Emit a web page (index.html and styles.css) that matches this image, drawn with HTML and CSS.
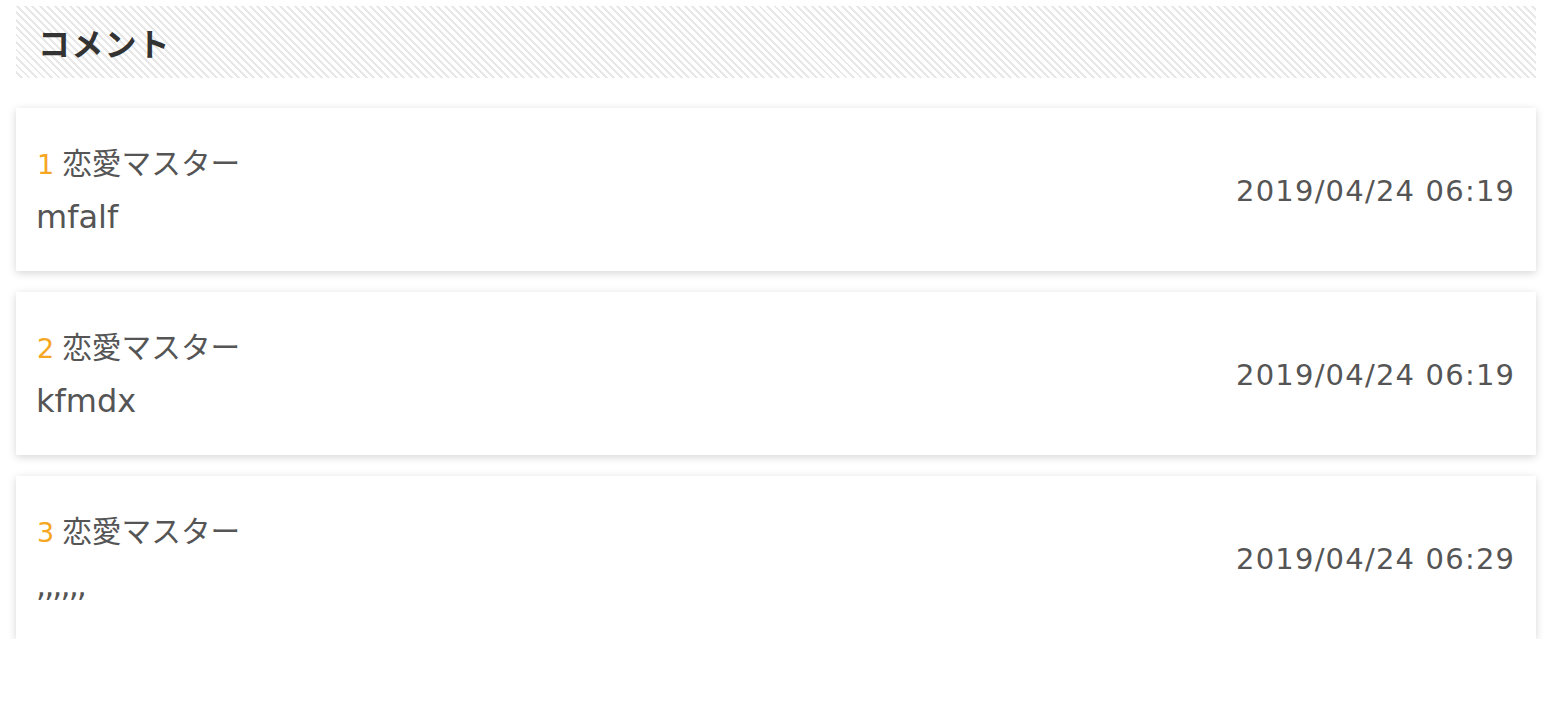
FILE: index.html
```html
<!DOCTYPE html>
<html lang="ja">
<head>
<meta charset="utf-8">
<link rel="stylesheet" href="styles.css">
</head>
<body>
<section class="comments">
  <h2 class="comments-title">コメント</h2>
  <ul class="comment-list">
    <li class="comment">
      <div class="comment-main">
        <div class="comment-name"><span class="comment-no">1</span>恋愛マスター</div>
        <div class="comment-body">mfalf</div>
      </div>
      <div class="comment-date">2019/04/24 06:19</div>
    </li>
    <li class="comment">
      <div class="comment-main">
        <div class="comment-name"><span class="comment-no">2</span>恋愛マスター</div>
        <div class="comment-body">kfmdx</div>
      </div>
      <div class="comment-date">2019/04/24 06:19</div>
    </li>
    <li class="comment">
      <div class="comment-main">
        <div class="comment-name"><span class="comment-no">3</span>恋愛マスター</div>
        <div class="comment-body comment-body--narrow">,,,,,,</div>
      </div>
      <div class="comment-date">2019/04/24 06:29</div>
    </li>
  </ul>
</section>
</body>
</html>
```
FILE: styles.css
```css
* { box-sizing: border-box; }
html, body { margin: 0; padding: 0; background: #fff; }
body {
  font-family: "DejaVu Sans", "Noto Sans CJK JP", sans-serif;
  color: #555;
  padding: 6px 20px 0 16px;
}
.comments-title {
  margin: 0;
  height: 72px;
  display: flex;
  align-items: center;
  padding-left: 22px;
  font-family: "Noto Sans CJK JP", sans-serif;
  font-size: 32px;
  letter-spacing: 1.2px;
  font-weight: 700;
  color: #333;
  background: repeating-linear-gradient(45deg, #fff 0, #fff 3.2px, #e8e8e8 3.2px, #e8e8e8 5.3px);
}
.comment-list {
  list-style: none;
  margin: 30px 0 0;
  padding: 0;
  display: flex;
  flex-direction: column;
  gap: 21px;
}
.comment {
  height: 163px;
  background: #fff;
  box-shadow: 0 2px 8px rgba(0,0,0,0.17);
  display: flex;
  align-items: center;
  justify-content: space-between;
  padding: 0 22px 0 20px;
}
.comment-main { display: flex; flex-direction: column; }
.comment-name {
  font-family: "Noto Sans CJK JP", sans-serif;
  font-size: 29.7px;
  line-height: 52px;
  color: #555;
}
.comment-no {
  color: #f5a623;
  font-family: "DejaVu Sans", sans-serif;
  font-size: 27px;
  margin-right: 8px;
  margin-left: 1px;
}
.comment-body {
  font-size: 32px;
  line-height: 53px;
  color: #555;
}
.comment-body--narrow { letter-spacing: -2px; }
.comment-date {
  font-size: 29px;
  letter-spacing: 1.2px;
  margin-right: -1.2px;
  padding-top: 2px;
  color: #555;
}
```
